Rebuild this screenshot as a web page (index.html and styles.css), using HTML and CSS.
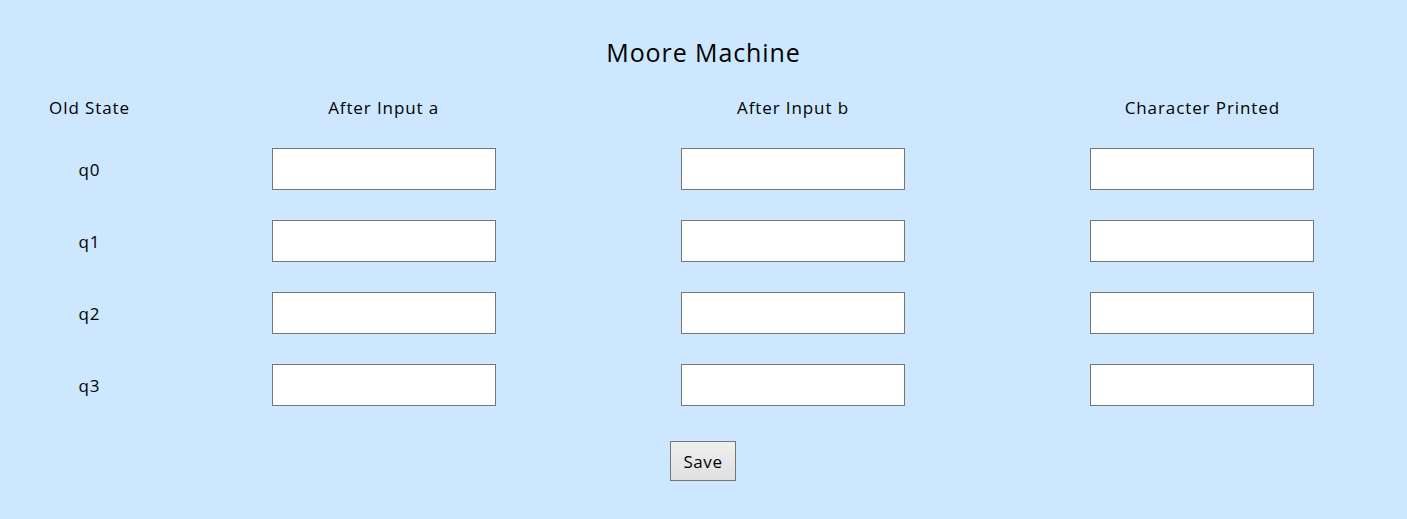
FILE: index.html
```html
<!DOCTYPE html>
<html lang="en">
<head>
<meta charset="utf-8">
<title>Moore Machine</title>
<link rel="stylesheet" href="styles.css">
</head>
<body>
<main class="page">
  <h1 class="title">Moore Machine</h1>
  <div class="table">
    <div class="head">Old State</div>
    <div class="head">After Input a</div>
    <div class="head">After Input b</div>
    <div class="head">Character Printed</div>

    <div class="state">q0</div>
    <div class="cell"><input type="text" class="field"></div>
    <div class="cell"><input type="text" class="field"></div>
    <div class="cell"><input type="text" class="field"></div>

    <div class="state">q1</div>
    <div class="cell"><input type="text" class="field"></div>
    <div class="cell"><input type="text" class="field"></div>
    <div class="cell"><input type="text" class="field"></div>

    <div class="state">q2</div>
    <div class="cell"><input type="text" class="field"></div>
    <div class="cell"><input type="text" class="field"></div>
    <div class="cell"><input type="text" class="field"></div>

    <div class="state">q3</div>
    <div class="cell"><input type="text" class="field"></div>
    <div class="cell"><input type="text" class="field"></div>
    <div class="cell"><input type="text" class="field"></div>
  </div>
  <div class="actions">
    <button type="button" class="save">Save</button>
  </div>
</main>
</body>
</html>
```

FILE: styles.css
```css
html, body {
  margin: 0;
  padding: 0;
}
body {
  background: #cce7fe;
  color: #000;
  font-family: "Open Sans", "Noto Sans", "DejaVu Sans", sans-serif;
  height: 519px;
}
.page {
  display: flex;
  flex-direction: column;
  align-items: stretch;
}
.title {
  margin: 0;
  padding-top: 36px;
  font-size: 25px;
  font-weight: 400;
  letter-spacing: 0.9px;
  line-height: 32px;
  text-align: center;
}
.table {
  display: grid;
  grid-template-columns: 179px 1fr 1fr 1fr;
  grid-template-rows: 20px;
  grid-auto-rows: 42px;
  row-gap: 30px;
  margin-top: 30px;
}
.head {
  font-size: 17px;
  letter-spacing: 0.9px;
  line-height: 20px;
  height: 20px;
  text-align: center;
  align-self: start;
}
.state {
  font-size: 17px;
  letter-spacing: 0.9px;
  display: flex;
  align-items: center;
  justify-content: center;
}
.cell {
  display: flex;
  align-items: center;
  justify-content: center;
}
.field {
  box-sizing: border-box;
  width: 224px;
  height: 42px;
  margin: 0;
  border: 1px solid #767676;
  background: #fff;
  padding: 0 6px;
  font-family: inherit;
  font-size: 16px;
}
.actions {
  display: flex;
  justify-content: center;
  margin-top: 35px;
  padding-right: 1px;
}
.save {
  box-sizing: border-box;
  width: 66px;
  height: 40px;
  font-family: inherit;
  font-size: 17px;
  letter-spacing: 0.6px;
  color: #000;
  background: linear-gradient(#efefef, #e0e0e0);
  border: 1px solid #767676;
  border-radius: 0;
  padding: 0;
}
```
